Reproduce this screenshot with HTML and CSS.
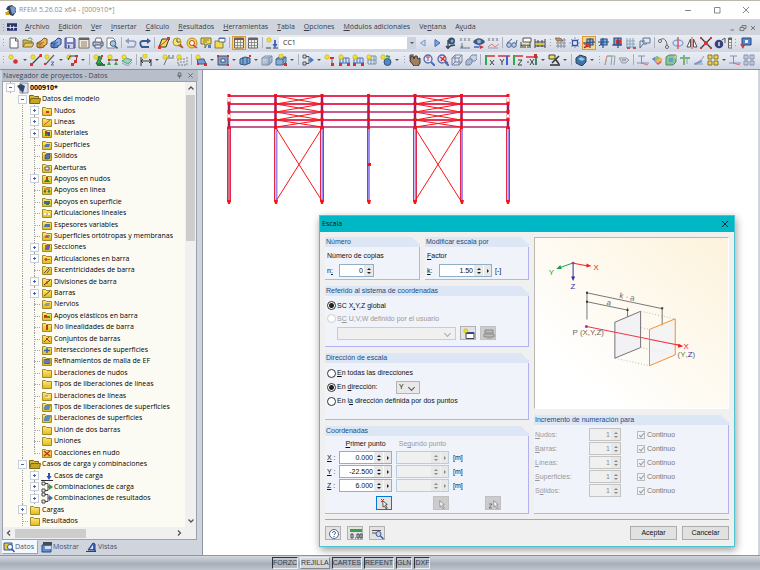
FILE: index.html
```html
<!DOCTYPE html>
<html lang="es">
<head>
<meta charset="utf-8">
<title>RFEM 5.26.02 x64 - [000910*]</title>
<link rel="stylesheet" href="styles.css">
</head>
<body>
<svg class="defs" aria-hidden="true">
  <defs>
    <linearGradient id="gold" x1="0" y1="0" x2="0" y2="1"><stop offset="0" stop-color="#ffe97a"/><stop offset="1" stop-color="#e2b91c"/></linearGradient>
    <linearGradient id="steel" x1="0" y1="0" x2="1" y2="1"><stop offset="0" stop-color="#e4edf8"/><stop offset="1" stop-color="#7d93b4"/></linearGradient>
  </defs>
  <symbol id="star" viewBox="0 0 12 12"><circle cx="3" cy="3" r="2.2" fill="#f2e21c" stroke="#b9a50c" stroke-width=".6"/></symbol>
  <symbol id="new" viewBox="0 0 12 12"><path d="M2 1h6l2 2.500V11H2z" fill="#fff" stroke="#555" /><path d="M7.500 1v3H10" fill="none" stroke="#555"/></symbol>
  <symbol id="open" viewBox="0 0 12 12"><path d="M1 10V3h4l1 1h4v2" fill="#d9b330" stroke="#77642a"/><path d="M1 10l2-4h9l-2 4z" fill="#e8c94b" stroke="#77642a"/><path d="M6 2c2-2 4-1 4 1" fill="none" stroke="#3e8a3a"/></symbol>
  <symbol id="pack" viewBox="0 0 12 12"><path d="M1 6l4-2 3 1v5l-4 1-3-1z" fill="#d8982f" stroke="#6b4a16"/><path d="M5 4l3-3 3 1v5L8 9" fill="#efb649" stroke="#6b4a16"/><path d="M1 6l3 1 4-2M4 7v4" fill="none" stroke="#6b4a16" stroke-width=".7"/></symbol>
  <symbol id="cubeb" viewBox="0 0 12 12"><path d="M1 6l4-2 3 1v5l-4 1-3-1z" fill="#4e7fd0" stroke="#1d3566"/><path d="M5 4l3-3 3 1v5L8 9" fill="#7fa6e6" stroke="#1d3566"/><path d="M1 6l3 1 4-2M4 7v4" fill="none" stroke="#1d3566" stroke-width=".7"/></symbol>
  <symbol id="save" viewBox="0 0 12 12"><path d="M1 1h9l1 1v9H1z" fill="#6f78c4" stroke="#3c4388"/><path d="M3 1h6v4H3z" fill="#f3f4fa"/><path d="M3 7h6v4H3z" fill="#cfd3e6"/><path d="M4 8h1.500v3H4z" fill="#3c4388"/></symbol>
  <symbol id="sheet" viewBox="0 0 12 12"><path d="M1 1h10v10H1z" fill="#f3ead8" stroke="#66605a"/><path d="M1 2h10" stroke="#555" stroke-width="2"/><path d="M3 5h6M3 7h6M3 9h6" stroke="#8a7a60"/></symbol>
  <symbol id="print" viewBox="0 0 12 12"><path d="M3 5l1-4h5l1 4" fill="#fff" stroke="#666"/><path d="M1 5h10v4H1z" fill="#a9b3cc" stroke="#4a5268"/><path d="M3 8h6v3H3z" fill="#e6ecfa" stroke="#4a5268"/><path d="M8 6.500h2" stroke="#3a7be0"/></symbol>
  <symbol id="preview" viewBox="0 0 12 12"><path d="M1 1h6l2 2v8H1z" fill="#fff" stroke="#777"/><circle cx="7" cy="6.500" r="2.800" fill="#9dc3f2" stroke="#35557e"/><path d="M9 9l2.500 2.500" stroke="#35557e" stroke-width="1.600"/></symbol>
  <symbol id="undo" viewBox="0 0 12 12"><path d="M2 4h6c4 0 3 4 1 6H2" fill="none" stroke="#8496b4" stroke-width="1.500"/><path d="M0 4l4-3v6z" fill="#8496b4"/></symbol>
  <symbol id="redo" viewBox="0 0 12 12"><path d="M10 4H4C0 4 1 8 3 10h7" fill="none" stroke="#274a86" stroke-width="1.800"/><path d="M12 4L8 1v6z" fill="#274a86"/></symbol>
  <symbol id="plane" viewBox="0 0 12 12"><path d="M1 10l3-8h7L8 10z" fill="#f3e13a" stroke="#222"/><path d="M2 9l7-6" stroke="#d22"/><path d="M0 9h3v3H0zM9 0h3v3H9z" fill="#d22"/></symbol>
  <symbol id="clock" viewBox="0 0 12 12"><circle cx="5" cy="5" r="4" fill="#f6e66a" stroke="#a2871a"/><path d="M5 2v3h3" stroke="#444" fill="none"/><path d="M6 8l5 3M8 7l3 4" stroke="#b34b1e" stroke-width="1.300"/></symbol>
  <symbol id="target" viewBox="0 0 12 12"><circle cx="6" cy="6" r="5" fill="#f4d838" stroke="#b08b14"/><circle cx="6" cy="6" r="2.500" fill="#fff" stroke="#d22a1c"/><path d="M7 8l4 3" stroke="#d22a1c" stroke-width="1.500"/></symbol>
  <symbol id="speech" viewBox="0 0 12 12"><path d="M1 1h10v6H7l-2 4V7H1z" fill="#f4df48" stroke="#6a6020"/><path d="M3 3h6M3 5h4" stroke="#806d20"/><path d="M8 8h3v3H8z" fill="#3a76c8"/></symbol>
  <symbol id="fwin" viewBox="0 0 12 12"><path d="M1 4h8v7H1z" fill="#f3d945" stroke="#807025"/><path d="M5 1h6v4H5z" fill="#fff" stroke="#55606e"/><path d="M5 1.500h6" stroke="#3a62a8"/></symbol>
  <symbol id="calc" viewBox="0 0 12 12"><path d="M1.500 1h9v10h-9z" fill="#f4f1ea" stroke="#555"/><path d="M1 2h10" stroke="#555" stroke-width="2"/><path d="M4.500 3v8M7.500 3v8M1 5.500h10M1 8.500h10" stroke="#777" stroke-width=".8"/></symbol>
  <symbol id="load" viewBox="0 0 12 12"><use href="#star"/><path d="M0 11h5M7 11h5" stroke="#333"/><path d="M9 3v5" stroke="#2952b8" stroke-width="1.800"/><path d="M6.500 7h5L9 11z" fill="#2952b8"/></symbol>
  <symbol id="prev" viewBox="0 0 12 12"><path d="M8 3L3.500 6 8 9z" fill="#cfdcf4" stroke="#6d8cc4"/></symbol>
  <symbol id="next" viewBox="0 0 12 12"><path d="M4 2.500L9 6 4 9.500z" fill="#6ea0ee" stroke="#2c5cb4"/></symbol>
  <symbol id="eyep" viewBox="0 0 12 12"><circle cx="6.500" cy="4" r="3.500" fill="#27405f"/><circle cx="7" cy="4" r="1.500" fill="#6aa5e8"/><path d="M3 3v8M1 9l2 2.500L5 9M5 9l5-1" fill="none" stroke="#203048" stroke-width="1.300"/></symbol>
  <symbol id="xxx" viewBox="0 0 12 12"><path d="M1 1l2 3M3 1L1 4M5 1l2 3M7 1L5 4M9 1l2 3M11 1L9 4" stroke="#7a828e" stroke-width=".8"/><path d="M3 6v4M1 11h10M2 9l1 2 1-2" fill="none" stroke="#5d6f8b"/></symbol>
  <symbol id="eyer" viewBox="0 0 12 12"><path d="M0 5c3-5 9-5 12 0-3 4-9 4-12 0z" fill="#32496a"/><circle cx="6" cy="4.500" r="2" fill="#7fb4ee"/><path d="M1 10h5" stroke="#2c4fd0" stroke-width="1.500"/><path d="M6 8l5 2-4 2z" fill="#d02020"/></symbol>
  <symbol id="xxr" viewBox="0 0 12 12"><path d="M1 1l2 3M3 1L1 4M5 1l2 3M7 1L5 4M9 1l2 3M11 1L9 4" stroke="#7a828e" stroke-width=".8"/><path d="M1 10l4-3 3 3 4-3" fill="none" stroke="#d07a80"/><path d="M1 11h10" stroke="#8d9ab2"/></symbol>
  <symbol id="glass" viewBox="0 0 12 12"><circle cx="3" cy="8" r="2.300" fill="#b8cbe4" stroke="#3b5a8a"/><circle cx="8" cy="8" r="2.300" fill="#b8cbe4" stroke="#3b5a8a"/><path d="M1 6l5-4M10 7l1-4" stroke="#3b5a8a"/></symbol>
  <symbol id="ruler" viewBox="0 0 12 12"><path d="M3 1h8v4H3z" fill="#fff" stroke="#444"/><path d="M1 5v6M10 5v6M3 7v4M5 7v4M8 7v4M1 8.500h9" stroke="#333"/><path d="M2 8h7" stroke="#d8c22c"/></symbol>
  <symbol id="ruler2" viewBox="0 0 12 12"><path d="M1 2v9M11 2v9M4 3v7M8 3v7M1 5h10M1 9h10" stroke="#333"/><path d="M2 7h8" stroke="#d8c22c" stroke-width="2"/></symbol>
  <symbol id="handg" viewBox="0 0 12 12"><path d="M1 3h10M1 6h10M1 9h10M3 1v10M6 1v10M9 1v10" stroke="#6d7685" stroke-width=".8"/><path d="M0 1h5l3 3H2z" fill="#b98b5a" stroke="#5a4024" stroke-width=".6"/></symbol>
  <symbol id="snap" viewBox="0 0 12 12"><path d="M0 6h12M6 0v12M2 2l8 8M10 2l-8 8" stroke="#6c83b2" stroke-width=".8" stroke-dasharray="2 1"/><path d="M3.500 3.500h5v5h-5z" fill="#e8eefa" stroke="#2444a0" stroke-width="1.300"/></symbol>
  <symbol id="wp" viewBox="0 0 12 12"><path d="M4 2h6v6H4z" fill="#78b8e8" stroke="#1c3e74" stroke-width="1.200"/><path d="M0 6l12-1M4 8l-3 3M7 1v10" stroke="#1c3e74" stroke-width="1.200"/><path d="M1 7h6M2 10l5-1" stroke="#d82018" stroke-width="1.300"/></symbol>
  <symbol id="wpb" viewBox="0 0 12 12"><path d="M4 2h6v6H4z" fill="#6cb2ec" stroke="#1c3e74" stroke-width="1.200"/><path d="M1 5h11M6 1v10" stroke="#1c3e74" stroke-width="1.200"/><path d="M2 9l3-3" stroke="#1c3e74"/></symbol>
  <symbol id="wpr" viewBox="0 0 12 12"><path d="M3 1h7v7H3z" fill="#6c9cdc" stroke="#1c3e74" stroke-width="1.200"/><path d="M5 3h5v4H5z" fill="#d82018"/><path d="M1 8h10M7 1v10" stroke="#1c3e74" stroke-width="1.200"/></symbol>
  <symbol id="gridp" viewBox="0 0 12 12"><path d="M2 1v10M5 1v10M8 1v10M1 4h9M1 7h9M1 10h10" stroke="#7ea0b6"/><path d="M2 10h3v2H2zM8 10h3v2H8z" fill="#cc3d3d"/></symbol>
  <symbol id="copyw" viewBox="0 0 12 12"><path d="M4 1h7v5H4z" fill="#dfe7f5" stroke="#50648a"/><path d="M1 4h5M1 4v7l3-4h4" fill="none" stroke="#50648a"/></symbol>
  <symbol id="arc" viewBox="0 0 12 12"><path d="M2 4c1-4 7-3 7 5" fill="none" stroke="#555"/><circle cx="2" cy="4" r="1.500" fill="#fff" stroke="#555"/><circle cx="9" cy="10" r="1.500" fill="#fff" stroke="#555"/></symbol>
  <symbol id="rot" viewBox="0 0 12 12"><ellipse cx="6" cy="6" rx="5" ry="3" fill="none" stroke="#7f9adf" stroke-width="1.400"/><path d="M6 0v12" stroke="#d83a3a" stroke-width="1.300"/></symbol>
  <symbol id="mirror" viewBox="0 0 12 12"><path d="M4.500 2v8H1zM7.500 2v8H11z" fill="#fff" stroke="#444"/><path d="M6 0v12" stroke="#d83a3a"/></symbol>
  <symbol id="cross" viewBox="0 0 12 12"><path d="M1 1l10 10M11 1L1 11" stroke="#222" stroke-width="1.300"/><path d="M4 4h4v4H4z" fill="#d82020"/><path d="M0 0h2v2H0zM10 0h2v2h-2zM0 10h2v2H0zM10 10h2v2h-2z" fill="#d82020"/></symbol>
  <symbol id="bomb" viewBox="0 0 12 12"><circle cx="5" cy="7" r="4.300" fill="#29306e"/><path d="M8 3l3-2v5" fill="none" stroke="#444"/><path d="M5 5v4" stroke="#fff" stroke-width="1.300"/></symbol>
  <symbol id="screen" viewBox="0 0 12 12"><path d="M2 1h9v7H2z" fill="#3f7fd0" stroke="#1c3468"/><path d="M5 3h3v3H5z" fill="#e8f2ff"/><path d="M0 7l5 1-2 4z" fill="#d02828"/></symbol>
  <symbol id="dot" viewBox="0 0 12 12"><use href="#star"/><circle cx="7.500" cy="7.500" r="2.300" fill="#d81c1c"/></symbol>
  <symbol id="line" viewBox="0 0 12 12"><use href="#star"/><path d="M1 11L11 1" stroke="#333" stroke-width="1.200"/><path d="M0 9h3v3H0zM9.500 0h2.500v3H9.500z" fill="#d81c1c"/></symbol>
  <symbol id="linez" viewBox="0 0 12 12"><use href="#star"/><path d="M1 11L10 1" stroke="#555" stroke-width="1.200"/><path d="M7 8h3l-3 3h3" fill="none" stroke="#3c5fc0"/><path d="M0 9h2v2H0z" fill="#d81c1c"/></symbol>
  <symbol id="poly" viewBox="0 0 12 12"><use href="#star"/><path d="M2 6l2-4h7l-1 6-3 2" fill="none" stroke="#333"/><path d="M9 1h3v2H9zM8 6h3v3H8zM5 9h3v3H5z" fill="#d81c1c"/></symbol>
  <symbol id="supp" viewBox="0 0 12 12"><use href="#star"/><path d="M6 2l3 2-2 3 3 3H3l2-4z" fill="#2f9e3a" stroke="#145a1c"/><path d="M4 10h8v2H4z" fill="#206a28"/><path d="M8 1h2v2H8z" fill="#d81c1c"/></symbol>
  <symbol id="supl" viewBox="0 0 12 12"><use href="#star"/><path d="M2 6h9" stroke="#555"/><path d="M0 11l2-4 2 4zM7 11l2-4 2 4z" fill="#2f9e3a"/><path d="M8 5h3v2H8zM1 5h2v2H1z" fill="#d81c1c"/></symbol>
  <symbol id="sups" viewBox="0 0 12 12"><path d="M1 7l4-3 6 2-4 4z" fill="#8fd4b8" stroke="#56907c"/><path d="M1 9l6 3 4-4" fill="none" stroke="#6aa8c4"/><use href="#star"/></symbol>
  <symbol id="dim" viewBox="0 0 12 12"><path d="M1 3v9M11 5v7M1 7h10M3 5L1 7l2 2M9 5l2 2-2 2" fill="none" stroke="#222"/><use href="#star" x="2" y="-1"/></symbol>
  <symbol id="dimx" viewBox="0 0 12 12"><path d="M2 11l3-7h7" fill="none" stroke="#666"/><path d="M6 1l2 2M8 1L6 3M10 1l2 2M12 1l-2 2" stroke="#888" stroke-width=".8"/><use href="#star"/></symbol>
  <symbol id="dimg" viewBox="0 0 12 12"><path d="M2 5v6h9V2M5 4v5M8 4v5" fill="none" stroke="#777" stroke-dasharray="2 1"/><use href="#star"/></symbol>
  <symbol id="surf" viewBox="0 0 12 12"><path d="M2 5h7l2 5H3z" fill="#6a96d2" stroke="#2a4a80"/><path d="M9 9h3v3H9zM2 9h2v2H2z" fill="#d81c1c"/><use href="#star"/></symbol>
  <symbol id="opening" viewBox="0 0 12 12"><path d="M1 2h10v9H1z" fill="#7b97c2" stroke="#2e466c"/><path d="M4 5h4v3H4z" fill="#fff" stroke="#2e466c"/><path d="M0 1h2v2H0zM10 1h2v2h-2zM10 10h2v2h-2z" fill="#d81c1c"/></symbol>
  <symbol id="beam" viewBox="0 0 12 12"><path d="M1 5l5-2 5 1v5l-5 2-5-1z" fill="#6d9ed8" stroke="#25466e"/><path d="M4 3v7M8 3v7" stroke="#25466e"/><path d="M10 1h2v2h-2z" fill="#d81c1c"/></symbol>
  <symbol id="solid" viewBox="0 0 12 12"><path d="M1 4l3-2h7v6l-3 3H1z" fill="url(#steel)" stroke="#7286a6"/><path d="M1 4h7v7M8 4l3-2" fill="none" stroke="#7286a6"/></symbol>
  <symbol id="solidn" viewBox="0 0 12 12"><path d="M1 5l3-2h7v5l-3 3H1z" fill="#7da6d4" stroke="#375a88"/><path d="M1 5h7v6M8 5l3-2" fill="none" stroke="#375a88"/><path d="M9 9h3v3H9z" fill="#d81c1c"/><use href="#star" y="-1" x="3"/></symbol>
  <symbol id="comb" viewBox="0 0 12 12"><path d="M1 1h3v3H1zM1 8h3v3H1zM4 2.500h3v7H4M7 6h2" fill="none" stroke="#444"/><path d="M8 3l4 3-4 3z" fill="#2f6fc4"/></symbol>
  <symbol id="combg" viewBox="0 0 12 12"><path d="M1 1h3v3H1zM1 8h3v3H1zM4 2.500h3v7H4M7 6h2" fill="none" stroke="#444"/><path d="M8 3l4 3-4 3z" fill="#24a03c"/></symbol>
  <symbol id="nload" viewBox="0 0 12 12"><path d="M8 4v5" stroke="#888" stroke-width="1.500"/><path d="M6 3h4v2H6zM7 9h3v3H7z" fill="#d81c1c"/><use href="#star"/></symbol>
  <symbol id="mload" viewBox="0 0 12 12"><path d="M2 4h9M2 4v5M5 4v5M8 4v5M11 4v5M1 9h11" stroke="#3465b4"/><path d="M1 9h3v3H1zM9 9h3v3H9z" fill="#d81c1c"/><use href="#star"/></symbol>
  <symbol id="pload" viewBox="0 0 12 12"><path d="M2 2h8v8H2zM5 2v8M2 6h8M8 2v8" fill="#e4ebf4" stroke="#6d89aa"/><use href="#star"/></symbol>
  <symbol id="dload" viewBox="0 0 12 12"><circle cx="7.500" cy="8" r="3.500" fill="#3f7fc8" stroke="#23436e"/><path d="M6 2l4 1" stroke="#2f9e3a" stroke-width="2"/><use href="#star"/></symbol>
  <symbol id="hand" viewBox="0 0 12 12"><path d="M2 2h2l1 3 1-3h2l1 3 2-1v5l-2 3H5L1 7z" fill="#9c7550" stroke="#2e2218"/><path d="M1 1h4M1 1v4" stroke="#333"/></symbol>
  <symbol id="zoomin" viewBox="0 0 12 12"><circle cx="5" cy="5" r="4" fill="#e5e9f8" stroke="#4060b4" stroke-width="1.300"/><path d="M3 3h4M5 3v4" stroke="#c03030"/><path d="M8 8l4 4" stroke="#4060b4" stroke-width="2"/></symbol>
  <symbol id="zoomx" viewBox="0 0 12 12"><circle cx="5" cy="5" r="4" fill="#f5dede" stroke="#4060b4" stroke-width="1.300"/><path d="M3 3l8 6M8 2L4 7" stroke="#c82020" stroke-width="1.300"/><path d="M8 8l4 4" stroke="#4060b4" stroke-width="2"/></symbol>
  <symbol id="wire" viewBox="0 0 12 12"><path d="M1 4l3-3h7v7l-3 3H1zM1 4h7v7M8 4l3-3M4 1v7h7M4 8l-3 3" fill="none" stroke="#6c7a98"/></symbol>
  <symbol id="cubes" viewBox="0 0 12 12"><path d="M5 3l2-2h5v4l-2 2H5z" fill="#c5d1e6" stroke="#6b7da0"/><path d="M1 7l2-2h4v4l-2 2H1z" fill="#a4b5d4" stroke="#6b7da0"/></symbol>
  <symbol id="axx" viewBox="0 0 12 12"><path d="M1 2h10" stroke="#d82020" stroke-width="1.500"/><path d="M2 1v10" stroke="#24a03c" stroke-width="2"/><path d="M6 6l4 5M10 6l-4 5" stroke="#333"/></symbol>
  <symbol id="axy" viewBox="0 0 12 12"><path d="M0 2h12" stroke="#d82020" stroke-width="1.500"/><path d="M2 5l2 3 2-3M4 8v3" fill="none" stroke="#333"/><path d="M9 2v9" stroke="#2c52d8" stroke-width="2"/></symbol>
  <symbol id="axz" viewBox="0 0 12 12"><path d="M1 2h10" stroke="#d82020" stroke-width="1.500"/><path d="M2 1v10" stroke="#24a03c" stroke-width="2"/><path d="M6 6h4l-4 5h4" fill="none" stroke="#333"/></symbol>
  <symbol id="axm" viewBox="0 0 12 12"><path d="M0 3h12" stroke="#d82020" stroke-width="1.500"/><path d="M1 8h2M4 5l4 6M8 5l-4 6" stroke="#333"/><path d="M10 2v9" stroke="#2f7a50" stroke-width="2"/><path d="M8 0h3v4H8z" fill="#c02020"/></symbol>
  <symbol id="lamp" viewBox="0 0 12 12"><path d="M1 1h6v4H1z" fill="#f3e13a" stroke="#333"/><path d="M2 11h10M4 9l7-7M8 6l3 4" stroke="#222" stroke-width="1.500"/></symbol>
  <symbol id="globe" viewBox="0 0 12 12"><path d="M1 4l4-3 6 2v5l-4 4-6-3z" fill="#2c6a9c" stroke="#15344e"/><path d="M3 5l3-2 4 2-3 2z" fill="#8cc4ea"/></symbol>
  <symbol id="graph" viewBox="0 0 12 12"><path d="M1 11l2-9h5l-1 9M8 2h3l-1 9" fill="none" stroke="#8c98a8"/><path d="M1 11l2-9" stroke="#d88080"/><path d="M3 2h5" stroke="#74b880"/></symbol>
  <symbol id="dimmed" viewBox="0 0 12 12"><path d="M1 4h7l3 2-3 3H4z" fill="#cdd0d6" stroke="#8f959f"/><path d="M4 6h4" stroke="#777"/></symbol>
  <symbol id="defl" viewBox="0 0 12 12"><path d="M1 2h7M4.500 2v7" stroke="#7688b4"/><path d="M0 9h12" stroke="#7688b4"/><path d="M4 9l7 2" stroke="#d66868"/></symbol>
  <symbol id="rain" viewBox="0 0 12 12"><path d="M1 5l5-3 6 3-5 4z" fill="#f2b04a"/><path d="M1 5l5-3 3 2-5 3z" fill="#6ec27c"/><path d="M2 6l5 3 4-3-1 3-3 2z" fill="#d05858"/><path d="M1 5l3-2v4z" fill="#4b7fe0"/></symbol>
  <symbol id="fem" viewBox="0 0 12 12"><path d="M1 3l3-2h7v7l-3 3H1z" fill="#7dc488" stroke="#547a5a"/><path d="M4 4h4v4H4z" fill="#4b9ad8"/><path d="M8 3l3-2v4z" fill="#e8c24a"/></symbol>
  <symbol id="sec" viewBox="0 0 12 12"><path d="M5 1v10M1 4h10" stroke="#6cae7a" stroke-width="2"/><path d="M8 5v5" stroke="#999"/></symbol>
  <symbol id="vec" viewBox="0 0 12 12"><path d="M1 10c5-1 8-5 10-8M1 10h9" fill="none" stroke="#8894ac"/><path d="M2 10l7-3" stroke="#7b8fd8" stroke-width="2"/></symbol>
  <symbol id="four" viewBox="0 0 12 12"><path d="M1 1h4v4H1zM7 1h4v4H7zM1 7h4v4H1zM7 7h4v4H7z" fill="#f0d440" stroke="#7b6a1c"/></symbol>
  <symbol id="tables" viewBox="0 0 12 12"><path d="M1 1h4v4H1zM7 1h4v4H7zM1 7h4v4H1zM7 7h4v4H7z" fill="#d4daec" stroke="#7d88aa"/><path d="M3 1v10M9 1v10" stroke="#7d88aa" stroke-width=".6"/></symbol>
  <symbol id="folder" viewBox="0 0 12 12"><path d="M1.500 2.500h3l1 1h5v7h-9z" fill="url(#gold)" stroke="#a38a2c"/></symbol>
  <symbol id="ofolder" viewBox="0 0 12 12"><path d="M.5 10V2.500h4l1 1h4V5" fill="#dcb828" stroke="#7b681c"/><path d="M.5 10.500l1.500-5h9.500l-1 5z" fill="#c9a61e" stroke="#7b681c"/></symbol>
  <symbol id="logo" viewBox="0 0 12 12"><path d="M1 5l2-3 4-1 4 3v4l-3 4-3-1z" fill="#33435e"/><path d="M5 3l3-1 3 3-1 4-3 1z" fill="#7d9cc8"/><path d="M0 8h4v3H1z" fill="#c8a028"/><path d="M1 6l3 1" stroke="#eee"/></symbol>
  <symbol id="pick" viewBox="0 0 12 12"><path d="M4 3l5 4-2 .5L9 11l-1.500.7L6 8.500 4.500 10z" fill="#fff" stroke="currentColor" stroke-width=".9"/></symbol>
</svg>

<div class="app">
  <header class="titlebar">
    <svg class="ic"><use href="#logo"/></svg>
    <h1>RFEM 5.26.02 x64 - [000910*]</h1>
    <div class="winbtns">
      <button aria-label="Minimizar"><svg viewBox="0 0 8 8"><path d="M1 4.500h6"/></svg></button>
      <button aria-label="Maximizar"><svg viewBox="0 0 8 8"><path d="M1.500 1.500h5.500v5.500H1.500z"/></svg></button>
      <button aria-label="Cerrar"><svg viewBox="0 0 8 8"><path d="M1 1l6 6M7 1L1 7"/></svg></button>
    </div>
  </header>

  <nav class="menubar">
    <i class="grip"></i>
    <svg class="mdi" viewBox="0 0 12 9"><path d="M0 0h12v9H0z" fill="#26336c"/><path d="M0 5h12M4 2v5M8 3v5" stroke="#fff"/></svg>
    <a href="#"><u>A</u>rchivo</a><a href="#"><u>E</u>dición</a><a href="#"><u>V</u>er</a><a href="#"><u>I</u>nsertar</a><a href="#"><u>C</u>álculo</a><a href="#"><u>R</u>esultados</a><a href="#"><u>H</u>erramientas</a><a href="#"><u>T</u>abla</a><a href="#"><u>O</u>pciones</a><a href="#"><u>M</u>ódulos adicionales</a><a href="#">Ve<u>n</u>tana</a><a href="#">A<u>y</u>uda</a>
    <div class="mdibtns">
      <button aria-label="Minimizar documento"><svg viewBox="0 0 8 8"><path d="M1.500 6h3.500"/></svg></button>
      <button aria-label="Restaurar documento"><svg viewBox="0 0 8 8"><path d="M1 3.500h4v3H1zM3 3.500V1.500h4v3H5"/></svg></button>
      <button aria-label="Cerrar documento"><svg viewBox="0 0 8 8"><path d="M2 2l4 4M6 2L2 6"/></svg></button>
    </div>
  </nav>

  <div class="toolbar">
    <i class="grip"></i>
    <button><svg><use href="#new"/></svg></button><button><svg><use href="#open"/></svg></button><button><svg><use href="#pack"/></svg></button><button><svg><use href="#cubeb"/></svg></button><button><svg><use href="#save"/></svg></button><button><svg><use href="#sheet"/></svg></button><button><svg><use href="#print"/></svg></button><button><svg><use href="#preview"/></svg></button>
    <i class="sep"></i>
    <button><svg><use href="#undo"/></svg></button><button><svg><use href="#redo"/></svg></button>
    <i class="sep"></i>
    <button><svg><use href="#plane"/></svg></button><button><svg><use href="#clock"/></svg></button><button><svg><use href="#target"/></svg></button><button><svg><use href="#speech"/></svg></button><button><svg><use href="#fwin"/></svg></button>
    <i class="sep"></i>
    <button class="on"><svg><use href="#calc"/></svg></button><button><svg><use href="#calc"/></svg></button>
    <i class="sep"></i>
    <button><svg><use href="#load"/></svg></button>
    <span class="case"><select aria-label="Caso de carga"><option>CC1</option></select></span>
    <button><svg><use href="#prev"/></svg></button><button><svg><use href="#next"/></svg></button><button><svg><use href="#eyep"/></svg></button><button><svg><use href="#xxx"/></svg></button><button><svg><use href="#eyer"/></svg></button><button><svg><use href="#xxr"/></svg></button>
    <i class="sep"></i>
    <button><svg><use href="#glass"/></svg></button><button><svg><use href="#ruler"/></svg></button><button><svg><use href="#ruler2"/></svg></button>
    <i class="grip"></i>
    <button><svg><use href="#handg"/></svg></button><button><svg><use href="#snap"/></svg></button><button class="on"><svg><use href="#wp"/></svg></button><button><svg><use href="#wpb"/></svg></button><button><svg><use href="#wpr"/></svg></button><button><svg><use href="#gridp"/></svg></button><button><svg><use href="#copyw"/></svg></button>
    <i class="sep"></i>
    <button><svg><use href="#arc"/></svg></button><button><svg><use href="#rot"/></svg></button><button><svg><use href="#mirror"/></svg></button><button><svg><use href="#cross"/></svg></button><button><svg><use href="#bomb"/></svg></button><button class="cut"><svg><use href="#calc"/></svg></button>
    <i class="grip"></i>
    <button><svg><use href="#screen"/></svg></button>
  </div>

  <div class="toolbar">
    <i class="grip"></i>
    <button><svg><use href="#dot"/></svg></button><i class="car"></i><button><svg><use href="#line"/></svg></button><button><svg><use href="#linez"/></svg></button><i class="car"></i><button><svg><use href="#poly"/></svg></button><i class="car"></i>
    <i class="sep"></i>
    <button><svg><use href="#supp"/></svg></button><button><svg><use href="#supl"/></svg></button><button><svg><use href="#sups"/></svg></button>
    <i class="sep"></i>
    <button><svg><use href="#dim"/></svg></button><i class="car"></i><button><svg><use href="#dimx"/></svg></button><button><svg><use href="#dimg"/></svg></button>
    <i class="sep"></i>
    <button><svg><use href="#surf"/></svg></button><i class="car"></i><button><svg><use href="#opening"/></svg></button><i class="car"></i><button><svg><use href="#beam"/></svg></button><i class="car"></i><button><svg><use href="#solid"/></svg></button><button><svg><use href="#solidn"/></svg></button><i class="car"></i>
    <i class="sep"></i>
    <button><svg><use href="#comb"/></svg></button><i class="car"></i><button><svg><use href="#nload"/></svg></button><button><svg><use href="#mload"/></svg></button><button><svg><use href="#mload"/></svg></button><button><svg><use href="#pload"/></svg></button><button><svg><use href="#dload"/></svg></button><i class="car"></i>
    <i class="grip"></i>
    <button><svg><use href="#hand"/></svg></button><button><svg><use href="#zoomin"/></svg></button><button><svg><use href="#zoomx"/></svg></button><button><svg><use href="#wire"/></svg></button><button><svg><use href="#cubes"/></svg></button>
    <i class="sep"></i>
    <button><svg><use href="#axx"/></svg></button><button><svg><use href="#axy"/></svg></button><button><svg><use href="#axz"/></svg></button><button><svg><use href="#axm"/></svg></button><i class="car"></i><button><svg><use href="#lamp"/></svg></button><i class="car"></i>
    <i class="sep"></i>
    <button><svg><use href="#globe"/></svg></button><i class="car"></i>
    <i class="grip"></i>
    <button><svg><use href="#graph"/></svg></button><button><svg><use href="#dimmed"/></svg></button>
    <i class="sep"></i>
    <button><svg><use href="#defl"/></svg></button><button><svg><use href="#rain"/></svg></button><button><svg><use href="#fem"/></svg></button><button><svg><use href="#sec"/></svg></button><button><svg><use href="#vec"/></svg></button><button><svg><use href="#four"/></svg></button><i class="car"></i><button><svg><use href="#defl"/></svg></button><button><svg><use href="#tables"/></svg></button>
  </div>

  <main class="work">
    <aside class="nav">
      <div class="navhead"><h2>Navegador de proyectos - Datos</h2>
        <button aria-label="Fijar"><svg viewBox="0 0 8 8"><path d="M2.500 1h3v3.500h-3zM1.500 4.500h5M4 4.500V7.500"/></svg></button>
        <button aria-label="Cerrar panel"><svg viewBox="0 0 8 8"><path d="M1.500 1.500l5 5M6.500 1.500l-5 5"/></svg></button>
      </div>
      <div class="treebox">
        <ul class="tree">
          <li><i class="t minus"></i><svg class="ic"><path d="M3 1h8v10H3z" fill="#dfe6f2" stroke="#8090a8"/><path d="M0 4l4-2 4 2-2 7-3-3z" fill="#2f456c"/></svg><b>000910*</b></li>
          <li><i></i><i class="t minus"></i><svg class="ic"><use href="#ofolder"/></svg>Datos del modelo</li>
          <li><i></i><i class="v"></i><i class="t"></i><svg class="ic"><use href="#folder"/><path d="M5 6h3v2H5z" fill="#d83020"/></svg>Nudos</li>
          <li><i></i><i class="v"></i><i class="t"></i><svg class="ic"><use href="#folder"/><path d="M3 9l6-5" stroke="#d05018"/></svg>Líneas</li>
          <li><i></i><i class="v"></i><i class="t"></i><svg class="ic"><use href="#folder"/><path d="M4 4h2v5H4z" fill="#c83020"/><path d="M6 5h3v4H6z" fill="#2c50a8"/><path d="M5 7h2v2H5z" fill="#2f9e3a"/></svg>Materiales</li>
          <li><i></i><i class="v"></i><i class="h"></i><svg class="ic"><use href="#folder"/><path d="M3 7l2-2h4L8 8H4z" fill="#4f78b0"/></svg>Superficies</li>
          <li><i></i><i class="v"></i><i class="h"></i><svg class="ic"><use href="#folder"/><path d="M4 5l2-1h3v4L7 9H4z" fill="#4f78b0" stroke="#234"  stroke-width=".5"/></svg>Sólidos</li>
          <li><i></i><i class="v"></i><i class="h"></i><svg class="ic"><use href="#folder"/><path d="M4 5h4v3H4z" fill="#e8eef6" stroke="#3f608e"/></svg>Aberturas</li>
          <li><i></i><i class="v"></i><i class="t"></i><svg class="ic"><use href="#folder"/><path d="M6 5l3 4H3z" fill="#1f8a30"/><path d="M5 4h2v2H5z" fill="#d83020"/></svg>Apoyos en nudos</li>
          <li><i></i><i class="v"></i><i class="h"></i><svg class="ic"><use href="#folder"/><path d="M3 5h6" stroke="#d83020"/><path d="M3 8l1-2 1 2zM7 8l1-2 1 2z" fill="#1f8a30" stroke="#1f8a30"/></svg>Apoyos en línea</li>
          <li><i></i><i class="v"></i><i class="h"></i><svg class="ic"><use href="#folder"/><path d="M3 5h6v3H3z" fill="#3c6aa0"/><path d="M5 7h3v2H5z" fill="#1f8a30"/></svg>Apoyos en superficie</li>
          <li><i></i><i class="v"></i><i class="h"></i><svg class="ic"><use href="#folder"/><path d="M3 7h6" stroke="#fff" stroke-width="2"/><path d="M5 7h2" stroke="#777"/></svg>Articulaciones lineales</li>
          <li><i></i><i class="v"></i><i class="h"></i><svg class="ic"><use href="#folder"/><path d="M3 8l1-3h5v3z" fill="#4a76a6"/></svg>Espesores variables</li>
          <li><i></i><i class="v"></i><i class="h"></i><svg class="ic"><use href="#folder"/><path d="M3 7l2-2h4L8 8H4z" fill="#6d88c0"/><path d="M5 6h2v1H5z" fill="#d83020"/></svg>Superficies ortótropas y membranas</li>
          <li><i></i><i class="v"></i><i class="t"></i><svg class="ic"><use href="#folder"/><path d="M4 4h5v2L8 9H4z" fill="#4a64d0"/><path d="M4 4h2v3H4z" fill="#c85050"/></svg>Secciones</li>
          <li><i></i><i class="v"></i><i class="t"></i><svg class="ic"><use href="#folder"/><path d="M3 6.500h6" stroke="#b06a14"/><path d="M4 5h2v3H4z" fill="#c85a20"/></svg>Articulaciones en barra</li>
          <li><i></i><i class="v"></i><i class="h"></i><svg class="ic"><use href="#folder"/><path d="M3 9l5-5M6 9l3-4" stroke="#6c5a34"/></svg>Excentricidades de barra</li>
          <li><i></i><i class="v"></i><i class="t"></i><svg class="ic"><use href="#folder"/><path d="M3 9l6-5" stroke="#333"/><path d="M5 5.500h2v2H5z" fill="#d83020"/></svg>Divisiones de barra</li>
          <li><i></i><i class="v"></i><i class="t"></i><svg class="ic"><use href="#folder"/><path d="M3 9l6-5" stroke="#58502c"/></svg>Barras</li>
          <li><i></i><i class="v"></i><i class="h"></i><svg class="ic"><use href="#folder"/><path d="M3 7l2-2h4L8 8H4z" fill="#8f9aa2"/></svg>Nervios</li>
          <li><i></i><i class="v"></i><i class="h"></i><svg class="ic"><use href="#folder"/><path d="M3 6h6v2H3z" fill="#2c9838"/><path d="M3 5h3v2H3z" fill="#c83020"/></svg>Apoyos elásticos en barra</li>
          <li><i></i><i class="v"></i><i class="h"></i><svg class="ic"><use href="#folder"/><path d="M6 4v5" stroke="#c83020" stroke-width="2"/></svg>No linealidades de barra</li>
          <li><i></i><i class="v"></i><i class="h"></i><svg class="ic"><use href="#folder"/><path d="M3 9l5-5M9 9L5 5" stroke="#a03c18"/></svg>Conjuntos de barras</li>
          <li><i></i><i class="v"></i><i class="h"></i><svg class="ic"><use href="#folder"/><path d="M3 6.500h6M6 4v5" stroke="#2c6ab0" stroke-width="1.500"/></svg>Intersecciones de superficies</li>
          <li><i></i><i class="v"></i><i class="h"></i><svg class="ic"><use href="#folder"/><path d="M3 4.500h6v4H3zM5 4v5M7 4v5" fill="#7c96c0" stroke="#38507c" stroke-width=".7"/></svg>Refinamientos de malla de EF</li>
          <li><i></i><i class="v"></i><i class="h"></i><svg class="ic"><use href="#folder"/></svg>Liberaciones de nudos</li>
          <li><i></i><i class="v"></i><i class="h"></i><svg class="ic"><use href="#folder"/></svg>Tipos de liberaciones de líneas</li>
          <li><i></i><i class="v"></i><i class="h"></i><svg class="ic"><use href="#folder"/><path d="M4 7h5" stroke="#fff"/><path d="M4 6h3" stroke="#888"/></svg>Liberaciones de líneas</li>
          <li><i></i><i class="v"></i><i class="h"></i><svg class="ic"><use href="#folder"/><path d="M3 7l1-3h6L8 9H3z" fill="#5a8cb8"/></svg>Tipos de liberaciones de superficies</li>
          <li><i></i><i class="v"></i><i class="h"></i><svg class="ic"><use href="#folder"/><path d="M3 7l1-3h6L8 9H3z" fill="#5a8cb8"/></svg>Liberaciones de superficies</li>
          <li><i></i><i class="v"></i><i class="h"></i><svg class="ic"><use href="#folder"/></svg>Unión de dos barras</li>
          <li><i></i><i class="v"></i><i class="h"></i><svg class="ic"><use href="#folder"/></svg>Uniones</li>
          <li><i></i><i class="v"></i><i class="h end"></i><svg class="ic"><use href="#folder"/><path d="M3 4l6 5M9 4L3 9" stroke="#c83020" stroke-width="1.500"/></svg>Coacciones en nudo</li>
          <li><i></i><i class="t minus"></i><svg class="ic"><use href="#ofolder"/></svg>Casos de carga y combinaciones</li>
          <li><i></i><i class="v"></i><i class="t"></i><svg class="ic"><path d="M0 10.500h12" stroke="#333"/><path d="M8 3v4" stroke="#2952b8" stroke-width="2"/><path d="M5.500 6h5L8 10z" fill="#2952b8"/></svg>Casos de carga</li>
          <li><i></i><i class="v"></i><i class="t"></i><svg class="ic"><use href="#combg"/></svg>Combinaciones de carga</li>
          <li><i></i><i class="v"></i><i class="t"></i><svg class="ic"><use href="#comb"/></svg>Combinaciones de resultados</li>
          <li><i></i><i class="t"></i><svg class="ic"><use href="#folder"/></svg>Cargas</li>
          <li><i></i><i class="h"></i><svg class="ic"><use href="#folder"/></svg>Resultados</li>
        </ul>
        <div class="vscroll"><svg viewBox="0 0 8 8"><path d="M1.500 5.500L4 3l2.500 2.500"/></svg><b></b><svg viewBox="0 0 8 8"><path d="M1.500 2.500L4 5l2.500-2.500"/></svg></div>
        <div class="hscroll"><svg viewBox="0 0 8 8"><path d="M5 1.500L2.500 4 5 6.500"/></svg><b></b><svg viewBox="0 0 8 8"><path d="M3 1.500L5.500 4 3 6.500"/></svg></div>
      </div>
      <div class="tabs">
        <button class="active"><svg class="ic"><path d="M1 2h8v7H1z" fill="#e9c832" stroke="#2c56a0"/><circle cx="7" cy="6" r="2.500" fill="#fff" stroke="#2c56a0"/><path d="M9 8l2.500 3" stroke="#2c56a0" stroke-width="1.500"/></svg>Datos</button>
        <button><svg class="ic"><path d="M1 4h9v7H1z" fill="#5f8fce" stroke="#2b4a7e"/><path d="M2 1h9v3H2z" fill="#444c5c"/><path d="M4 5h6v3H4z" fill="#cfe0f6"/></svg>Mostrar</button>
        <button><svg class="ic"><path d="M2 9l5-7 2 1v6z" fill="#3c66c0" stroke="#22408a"/><path d="M4 8l3-4v4z" fill="#dfe8f8"/><path d="M0 10.500h10M7 8l3 2" stroke="#22408a"/></svg>Vistas</button>
      </div>
    </aside>

    <section class="canvas" aria-label="Modelo">
      <svg class="model" viewBox="203 69 327 141">
        <g fill="none" stroke="#e8305a" stroke-width="2">
          <path d="M229 95h279M229 103h279M229 119h279"/>
        </g>
        <g fill="none" stroke="#b02a6c" stroke-width="1.500"><path d="M229 111h279M229 126h279"/></g>
        <g stroke="#9a8af2" stroke-width="2"><path d="M276.500 126v75M322.500 126v75M369 126v75M415.500 126v75M462 126v75M508.500 126v75"/></g>
        <g stroke="#d07090" stroke-width="2"><path d="M229 126v75"/></g>
        <g stroke="#e02848" stroke-width="1"><path d="M227.500 126v75M230.500 126v75M274.500 126v75M320.500 126v75M323.500 126v75M367.500 126v75M413.500 126v75M416.500 126v75M460.500 126v75M506.500 126v75M509.500 126v75"/></g>
        <g stroke="#8c2272" stroke-width="2.500"><path d="M229 98v28M275.500 93v33M322 93v33M368.500 93v33M415 93v33M461.500 93v33M508 98v28"/></g>
        <g fill="none" stroke="#fb1414">
          <path d="M276 95l46 8M322 95l-46 8M276 103l46 8M322 103l-46 8M276 111l46 8M322 111l-46 8M276 119l46 7M322 119l-46 7"/>
          <path d="M415 95l46 8M461 95l-46 8M415 103l46 8M461 103l-46 8M415 111l46 8M461 111l-46 8M415 119l46 7M461 119l-46 7"/>
          <path d="M276 127l46 73M322 127l-46 73M415 127l46 73M461 127l-46 73"/>
        </g>
        <g stroke="#f01020" stroke-width="3" stroke-dasharray="3 5"><path d="M229 93v35M275.500 93v35M322 93v35M368.500 93v35M415 93v35M461.500 93v35M508 93v35"/></g>
        <path fill="#fb1414" d="M227 199h4l-1 4h-2zM274 199h4l-1 4h-2zM320 199h4l-1 4h-2zM367 199h4l-1 4h-2zM413 199h4l-1 4h-2zM460 199h4l-1 4h-2zM506 199h4l-1 4h-2zM367 162h4v3h-4z"/>
        <g fill="#fff" stroke="#f59a9a" stroke-width=".7"><circle cx="229" cy="99" r="1.800"/><circle cx="229" cy="115" r="1.800"/><circle cx="508" cy="99" r="1.800"/><circle cx="508" cy="115" r="1.800"/></g>
      </svg>
    </section>
  </main>

  <footer class="status">
    <button>FORZC</button><button class="up">REJILLA</button><button>CARTES</button><button>REFENT</button><button>GLN</button><button>DXF</button>
  </footer>
</div>

<form class="dialog" role="dialog" aria-labelledby="dt">
  <div class="dtitle"><h2 id="dt">Escala</h2><button type="button" aria-label="Cerrar"><svg viewBox="0 0 8 8"><path d="M1 1l6 6M7 1L1 7"/></svg></button></div>
  <div class="dbody">
    <div class="left">
      <div class="pair">
        <section class="group g1"><h3>Número</h3>
          <p>Número de copias</p>
          <div class="row"><label class="lab" for="n">n<u>:</u></label><span class="num w35"><input id="n" value="0"><button type="button" class="spin" aria-label="Cambiar"></button></span></div>
        </section>
        <section class="group g1 grow"><h3>Modificar escala por</h3>
          <p><u>F</u>actor</p>
          <div class="row"><label class="lab" for="k"><u>k</u>:</label><span class="num w53"><input id="k" value="1.50"><button type="button" class="spin" aria-label="Cambiar"></button><button type="button" class="more" aria-label="Más"></button></span><span class="unit">[-]</span></div>
        </section>
      </div>
      <section class="group g2"><h3>Referido al sistema de coordenadas</h3>
        <label class="opt"><input type="radio" name="cs" checked>SC X<u>,</u>Y,Z global</label>
        <label class="opt off"><input type="radio" name="cs" disabled>S<u>C</u> U,V,W definido por el usuario</label>
        <div class="row ucs"><span class="sel off wide"><select disabled aria-label="Sistema de coordenadas"><option></option></select></span>
          <button type="button" class="tool" aria-label="Nuevo sistema"><svg class="ic"><path d="M3 4.500h8v6H3z" fill="#fff" stroke="#445"/><path d="M3 5h8" stroke="#2a4a90" stroke-width="2"/><use href="#star"/></svg></button>
          <button type="button" class="tool dis" disabled aria-label="Editar sistema"><svg class="ic"><path d="M2 2h8v3H2zM1 6h10v3H1z" fill="#bbb" stroke="#888"/><path d="M4 10h5" stroke="#999"/></svg></button></div>
      </section>
      <section class="group g3"><h3>Dirección de escala</h3>
        <label class="opt"><input type="radio" name="dir"><span><u>E</u>n todas las direcciones</span></label>
        <div class="row dirrow"><label class="opt"><input type="radio" name="dir" checked>En <u>d</u>irección:</label><span class="sel axis"><select aria-label="Eje"><option>Y</option></select></span></div>
        <label class="opt"><input type="radio" name="dir"><span>En l<u>a</u> dirección definida por dos puntos</span></label>
      </section>
      <section class="group g4"><h3>Coordenadas</h3>
        <div class="coords">
          <span></span><span class="ch"><u>P</u>rimer punto</span><span class="ch off">Se<u>g</u>undo punto</span><span></span>
          <label for="x1"><u>X</u> :</label><span class="num"><input id="x1" value="0.000"><button type="button" class="spin" aria-label="Cambiar"></button><button type="button" class="more" aria-label="Más"></button></span><span class="num off"><input disabled aria-label="X segundo punto"><button type="button" class="spin" disabled aria-label="Cambiar"></button><button type="button" class="more" disabled aria-label="Más"></button></span><span class="unit">[m]</span>
          <label for="y1"><u>Y</u> :</label><span class="num"><input id="y1" value="-22.500"><button type="button" class="spin" aria-label="Cambiar"></button><button type="button" class="more" aria-label="Más"></button></span><span class="num off"><input disabled aria-label="Y segundo punto"><button type="button" class="spin" disabled aria-label="Cambiar"></button><button type="button" class="more" disabled aria-label="Más"></button></span><span class="unit">[m]</span>
          <label for="z1"><u>Z</u> :</label><span class="num"><input id="z1" value="6.000"><button type="button" class="spin" aria-label="Cambiar"></button><button type="button" class="more" aria-label="Más"></button></span><span class="num off"><input disabled aria-label="Z segundo punto"><button type="button" class="spin" disabled aria-label="Cambiar"></button><button type="button" class="more" disabled aria-label="Más"></button></span><span class="unit">[m]</span>
          <span></span><span class="pk"><button type="button" class="tool focus" aria-label="Seleccionar primer punto"><svg class="ic"><use href="#pick"/><path d="M2 1l3 3M5 1L2 4" stroke="#d82020"/></svg></button></span><span class="pk"><button type="button" class="tool dis" disabled aria-label="Seleccionar segundo punto"><svg class="ic"><use href="#pick"/></svg></button></span><span class="pk"><button type="button" class="tool dis" disabled aria-label="Seleccionar dos puntos"><svg class="ic"><use href="#pick" x="2"/><path d="M1 6h3l-3 4h3" fill="none" stroke="#777"/></svg></button></span>
        </div>
      </section>
    </div>
    <div class="right">
      <div class="preview">
        <svg viewBox="534 237 195 171">
          <path d="M572 262l16 3" stroke="#f02020"/><path d="M591 265l-5-2.500v4z" fill="#f02020"/>
          <path d="M572 262l-14 5" stroke="#18a050"/><path d="M555.500 268l4-4 1.500 4z" fill="#18a050"/>
          <path d="M572.500 262v15" stroke="#30309a"/><path d="M572.500 280l-2-4.500h4z" fill="#30309a"/>
          <circle cx="572.500" cy="262" r="1.500" fill="#b03a80"/>
          <text x="593" y="269" fill="#f02020">X</text><text x="548" y="274" fill="#18a050">Y</text><text x="570" y="288" fill="#30309a">Z</text>
          <g stroke="#555" stroke-width=".8" fill="none"><path d="M586.500 291v28M586.500 292l76 16v18M586.500 301l41 8.500M627.500 307v10"/></g>
          <path d="M585.500 291h2v2h-2zM585.500 300h2v2h-2zM661.500 306.500h2v2h-2zM626.500 308.500h2v2h-2z" fill="#333"/>
          <g stroke="#aaa" stroke-width=".8" stroke-dasharray="1 2"><path d="M614.700 321.700l35 7.300M640.700 310.700l35 7.600M640.700 347.300l35 7.400M614.700 358l35 7.700"/></g>
          <path d="M614.700 321.700l26-11v36.600l-26 10.700z" fill="#f2f2f5" stroke="#777078"/>
          <path d="M586 326l94 19" stroke="#f03040"/>
          <path d="M649.700 329l26-10.700v36.400l-26 11z" fill="#f2f2f5" fill-opacity=".75" stroke="#f09030"/>
          <path d="M649.700 339l30 6" stroke="#f03040"/><path d="M684 346l-5-2.500-.7 4z" fill="#f02020"/>
          <circle cx="586" cy="326" r="1.600" fill="#b03a80"/>
          <g fill="#666"><text transform="rotate(12 619 297)" x="619" y="297">k · a</text><text transform="rotate(12 606 304)" x="606" y="304">a</text>
          <text x="572" y="335">P (X,Y,Z)</text></g>
          <text x="684" y="349" fill="#f02020">X</text>
          <text x="678" y="357" fill="#666">(<tspan fill="#18a050">Y</tspan>,<tspan fill="#30309a">Z</tspan>)</text>
        </svg>
      </div>
      <section class="group g5"><h3>Incremento de numeración para</h3>
        <div class="incs">
          <label for="i1"><u>N</u>udos:</label><span class="num off"><input id="i1" value="1" disabled><button type="button" class="spin" disabled aria-label="Cambiar"></button></span><label class="chk"><input type="checkbox" checked disabled>Continuo</label>
          <label for="i2"><u>B</u>arras:</label><span class="num off"><input id="i2" value="1" disabled><button type="button" class="spin" disabled aria-label="Cambiar"></button></span><label class="chk"><input type="checkbox" checked disabled>Continuo</label>
          <label for="i3"><u>L</u>íneas:</label><span class="num off"><input id="i3" value="1" disabled><button type="button" class="spin" disabled aria-label="Cambiar"></button></span><label class="chk"><input type="checkbox" checked disabled>Continuo</label>
          <label for="i4"><u>S</u>uperficies:</label><span class="num off"><input id="i4" value="1" disabled><button type="button" class="spin" disabled aria-label="Cambiar"></button></span><label class="chk"><input type="checkbox" checked disabled>Continuo</label>
          <label for="i5">S<u>ó</u>lidos:</label><span class="num off"><input id="i5" value="1" disabled><button type="button" class="spin" disabled aria-label="Cambiar"></button></span><label class="chk"><input type="checkbox" checked disabled>Continuo</label>
        </div>
      </section>
    </div>
  </div>
  <div class="dfoot">
    <button type="button" class="tool" aria-label="Ayuda"><svg class="ic"><circle cx="6" cy="6" r="4.500" fill="#fff" stroke="#55688e"/><path d="M4.500 5c0-2 3-2 3 0 0 1-1.500 1-1.500 2M6 8v1" fill="none" stroke="#2a4a90"/></svg></button>
    <button type="button" class="tool" aria-label="Unidades"><svg class="ic"><path d="M0 1h12v3H0z" fill="#3aa048"/><path d="M1 6h2v4H1zM5 10h1M7 6h2v4H7zM10 6h2v4h-2z" fill="none" stroke="#445"/></svg></button>
    <button type="button" class="tool" aria-label="Detalles"><svg class="ic"><path d="M0 2.500h9M0 5h4" stroke="#555"/><circle cx="6.500" cy="6" r="2.500" fill="#c5d6f0" stroke="#3a5a98"/><path d="M8.500 8l3 3" stroke="#3a5a98" stroke-width="1.500"/></svg></button>
    <span class="spacer"></span>
    <button type="button" class="push">Aceptar</button><button type="button" class="push">Cancelar</button>
  </div>
</form>
</body>
</html>
```

FILE: styles.css
```css
* { box-sizing: border-box; }
html, body { height: 100%; margin: 0; overflow: hidden; }
body {
  font: 7px/10px "Open Sans", "Noto Sans", sans-serif;
  color: #222;
  background: #fff;
}
h1, h2, h3, p, ul { margin: 0; padding: 0; font-size: inherit; font-weight: 400; }
ul { list-style: none; }
button, input, select { font: inherit; color: inherit; margin: 0; padding: 0; border: 0; background: none; border-radius: 0; appearance: none; outline: 0; }
a { color: inherit; text-decoration: none; }
.defs { position: absolute; width: 0; height: 0; }
.ic { width: 12px; height: 12px; flex: none; }

.app { display: flex; flex-direction: column; height: 100vh; border-top: 1px solid #bdb8ac; background: #d0d4dd; }

/* title and menu */
.titlebar { display: flex; align-items: center; flex: none; height: 18px; padding-left: 5px; background: #fff; color: #8c8c8c; }
.titlebar h1 { padding-left: 2px; flex: 1; }
.winbtns { display: flex; }
.winbtns button { width: 29px; height: 18px; display: grid; place-items: center; }
.winbtns svg { width: 8px; height: 8px; fill: none; stroke: #888; }
.menubar { display: flex; align-items: center; flex: none; height: 16px; gap: 9px; background: #d0d4dd; color: #363c4a; }
.menubar .grip { margin-right: -9px; }
.mdi { width: 10px; height: 8px; margin-right: -1px; }
.mdibtns { margin-left: auto; display: flex; padding-right: 2px; align-self: flex-end; }
.mdibtns button { width: 10px; height: 12px; }
.mdibtns svg { width: 8px; height: 8px; fill: none; stroke: #777; }

/* toolbars */
.toolbar { display: flex; align-items: center; flex: none; height: 17px; padding-bottom: 2px; overflow: hidden; background: linear-gradient(#eaedf4, #dfe3ec 50%, #cfd5e2); }
.toolbar button { width: 14px; height: 14px; flex: none; display: grid; place-items: center; }
.toolbar svg { width: 12px; height: 12px; opacity: .9; }
.toolbar .on { background: #fbd78b; box-shadow: inset 0 0 0 1px #d99a3c; }
.toolbar .cut { width: 5px; overflow: hidden; }
.grip { width: 7px; height: 11px; flex: none; background: radial-gradient(circle, #9aa2b2 1px, transparent 1px) center / 3px 3px repeat-y; }
.sep { width: 5px; height: 11px; flex: none; background: linear-gradient(#a9b0be, #a9b0be) center / 1px 100% no-repeat; }
.car { width: 8px; flex: none; display: grid; place-items: center; }
.car::before { content: ""; border: 2px solid transparent; border-top-color: #555; border-bottom: 0; }
.case { width: 137px; height: 12px; flex: none; position: relative; background: #fff; }
.case select { width: 100%; height: 12px; padding-left: 4px; }
.case::before { content: ""; position: absolute; top: 0; right: 0; width: 9px; height: 12px; background: #ccd2de; }
.case::after { content: ""; position: absolute; top: 5px; right: 2px; border: 2px solid transparent; border-top-color: #555; border-bottom: 0; }

/* navigator */
.work { display: flex; flex: 1; min-height: 0; border-top: 1px solid #8b909b; padding-right: 2px; }
.nav { width: 203px; flex: none; display: flex; flex-direction: column; padding: 0 5px 0 2px; border-right: 1px solid #9097a3; }
.navhead { display: flex; align-items: center; flex: none; height: 11px; padding-left: 1px; margin-right: -1px; background: #b8bfcb; color: #3f4654; }
.navhead h2 { flex: 1; }
.navhead button { width: 11px; height: 8px; }
.navhead svg { width: 7px; height: 7px; fill: none; stroke: #666; display: block; }
.treebox { flex: 1; min-height: 0; display: grid; grid-template: 1fr 12px / 1fr 11px; border: 1px solid #9aa1ad; background: #f0f0f0; }
.tree { display: flex; flex-direction: column; min-height: 0; overflow: hidden; padding-left: 1px; background: #fcfbf3; color: #000; }
.tree li { flex: 1; min-height: 0; display: flex; align-items: center; white-space: pre; }
.tree li > i { width: 12px; align-self: stretch; flex: none; position: relative; }
.tree .ic { margin: 0 1px; overflow: visible; }
.v, .h, .t { background: repeating-linear-gradient(#999 0 1px, transparent 1px 2px) 6px 0 / 1px 100% no-repeat; }
.h::after { content: ""; position: absolute; left: 6px; right: 0; top: 50%; border-top: 1px dotted #aaa; }
.tree .end { background-size: 1px 50%; }
.t { display: grid; place-items: center; }
.t::before { content: ""; width: 7px; height: 7px; margin-left: 1px; border: 1px solid #c8ceda; background: linear-gradient(#4a66a0, #4a66a0) center / 3px 1px no-repeat, linear-gradient(#4a66a0, #4a66a0) center / 1px 3px no-repeat, #fff; }
.t.minus::before { background: linear-gradient(#4a66a0, #4a66a0) center / 3px 1px no-repeat, #fff; }
.vscroll, .hscroll { display: flex; align-items: center; background: #f0f0f0; }
.vscroll { flex-direction: column; padding: 2px 0; }
.vscroll b { width: 9px; height: 33%; margin: 3px 0 auto; background: #cdcdcd; }
.hscroll b { width: 40%; height: 9px; margin: 0 auto 0 2px; background: #cdcdcd; }
.hscroll { padding: 0 2px; }
.vscroll svg, .hscroll svg { width: 8px; height: 8px; flex: none; fill: none; stroke: #555; stroke-width: 1.3; }
.tabs { display: flex; flex: none; height: 15px; gap: 3px; color: #45506a; }
.tabs button { display: flex; align-items: center; height: 13px; padding: 0 3px 0 1px; }
.tabs .active { background: #f4f8fc; box-shadow: 1px 1px 0 #9ca4b2; }

.canvas { flex: 1; min-width: 0; background: #fff; }
.model { display: block; width: 327px; height: 141px; }

/* status bar */
.status { display: flex; align-items: center; flex: none; height: 15px; padding-left: 272px; gap: 2px; border-top: 1px solid #8f95a0; background: linear-gradient(#d3d7de, #a9afba 55%, #bfc4cd); color: #333a48; }
.status button { height: 12px; border: 1px solid; border-color: #333 #eee #eee #333; font: 7px/10px "Liberation Sans", sans-serif; }
.status .up { border-color: #eee #888 #888 #eee; background: #d3d6dc; }

/* dialog */
.dialog {
  position: absolute; left: 319px; top: 215px; width: 416px;
  border: 1px solid #4cc4d0; background: #f0f0f0; box-shadow: 1px 3px 8px rgba(0, 0, 0, .4);
  font: 7px/10px "Liberation Sans", Arial, sans-serif; color: #111;
}
.dtitle { display: flex; align-items: center; height: 16px; padding: 0 5px 0 2px; background: #00b7c6; font: 7px/10px "Open Sans", sans-serif; }
.dtitle h2 { flex: 1; }
.dtitle svg { width: 8px; height: 8px; display: block; fill: none; stroke: #123; }
.dbody { display: flex; gap: 5px; padding: 5px; }
.left { width: 204px; display: flex; flex-direction: column; gap: 6px; }
.right { flex: 1; display: flex; flex-direction: column; gap: 6px; }
.pair { display: flex; gap: 5px; }
.pair .group { width: 95px; }
.pair .grow { flex: 1; }
.group { background: #f0f3f9; border: solid #b2b2f0; border-width: 0 1px 1px 0; clip-path: polygon(0 0, calc(100% - 8px) 0, 100% 8px, 100% 100%, 0 100%); }
.group h3 { height: 10px; padding-left: 1px; margin-right: -1px; background: #dce6f4; color: #234a7c; }
.g1 { height: 43px; }
.g2 { height: 61px; }
.g3 { height: 67px; }
.g4 { height: 88px; }
.g5 { flex: 1; }
.group p { padding: 4px 2px 3px; }
.row { display: flex; align-items: center; }
.lab { width: 14px; padding-left: 2px; }
.unit { padding-left: 3px; }
.num { display: flex; height: 13px; border: 1px solid #8fb0c8; background: #fff; }
.num input { flex: 1; min-width: 0; width: 0; text-align: right; padding-right: 1px; }
.w35 { width: 35px; }
.w53 { width: 53px; }
.spin, .more { background: #e8e8e8; display: flex; flex-direction: column; align-items: center; justify-content: center; gap: 2px; }
.spin { width: 9px; }
.more { width: 7px; margin-left: 1px; }
.spin::before, .spin::after, .more::before { content: ""; border: 2px solid transparent; }
.spin::before { border-top: 0; border-bottom-color: #222; }
.spin::after { border-bottom: 0; border-top-color: #222; }
.more::before { border-right: 0; border-left-color: #222; }
.off { color: #999; }
.num.off { background: #f0f0f0; border-color: #b8cede; color: #888; }
.num.off .spin::before { border-bottom-color: #888; }
.num.off .spin::after { border-top-color: #888; }
.num.off .more::before { border-left-color: #888; }
.opt { display: flex; align-items: center; white-space: pre; height: 14px; padding-left: 2px; }
.opt input { width: 9px; height: 9px; flex: none; margin-right: 1px; border: 1px solid #333; border-radius: 50%; background: #fff; }
.opt input:checked { background: radial-gradient(circle, #222 2px, #fff 3px); }
.opt.off input { border-color: #ccc; }
.g2 .opt { height: 13px; }
.g2 h3, .g3 h3 { margin-bottom: 3px; }
.sel { position: relative; height: 13px; border: 1px solid #b4b4b4; background: #e8e8e8; }
.sel select { width: 100%; height: 11px; padding-left: 2px; display: block; }
.sel::after { content: ""; position: absolute; right: 5px; top: 3px; width: 4px; height: 4px; border: solid #555; border-width: 0 1px 1px 0; transform: rotate(45deg); pointer-events: none; }
.sel.off { background: #f0f0f0; border-color: #ccc; }
.sel.off::after { border-color: #aaa; }
.wide { width: 119px; }
.axis { width: 24px; }
.ucs { gap: 4px; padding: 1px 0 0 12px; }
.dirrow .opt { width: 71px; }
.tool { width: 16px; height: 14px; flex: none; display: grid; place-items: center; border: 1px solid #b0b0b0; background: #e3e3e3; color: #333; }
.tool .ic { width: 11px; height: 11px; overflow: visible; }
.dis { background: #ccc; border-color: #c0c0c0; color: #888; }
.focus { border: 1px solid #0078d7; }
.coords { display: grid; grid-template-columns: 8px 53px 53px 48px; grid-template-rows: 12px 13px 13px 13px 17px; column-gap: 4px; row-gap: 1px; align-items: center; padding: 2px 2px 0; }
.coords label { white-space: pre; }
.coords > .unit { padding-left: 0; }
.ch { text-align: center; white-space: pre; }
.pk { display: flex; justify-content: flex-end; align-self: end; }
.preview { height: 172px; border: 1px solid; border-color: #b8b8b0 #fff #fff #b8b8b0; background: linear-gradient(to top right, #fff 20%, #fdf3dc); }
.preview svg { display: block; width: 100%; height: 100%; font: 8px "Liberation Sans", sans-serif; }
.incs { display: grid; grid-template-columns: 54px 32px 1fr; align-items: center; row-gap: 1px; padding: 3px 1px; color: #999; }
.incs .num { border-color: #c4c4c4; }
.chk { display: flex; align-items: center; height: 13px; padding-left: 16px; color: #777; }
.chk input { width: 8px; height: 8px; margin-right: 2px; border: 1px solid #bbb; position: relative; }
.chk input:checked::after { content: ""; position: absolute; left: 2px; top: 0; width: 2px; height: 4px; border: solid #999; border-width: 0 1px 1px 0; transform: rotate(40deg); }
.dfoot { display: flex; align-items: center; gap: 6px; margin: 0 5px; padding: 6px 0; border-top: 1px solid #a8a8a8; }
.spacer { flex: 1; }
.push { width: 47px; height: 14px; border: 1px solid #adadad; background: #e1e1e1; }
.push + .push { margin-left: -1px; }
```
